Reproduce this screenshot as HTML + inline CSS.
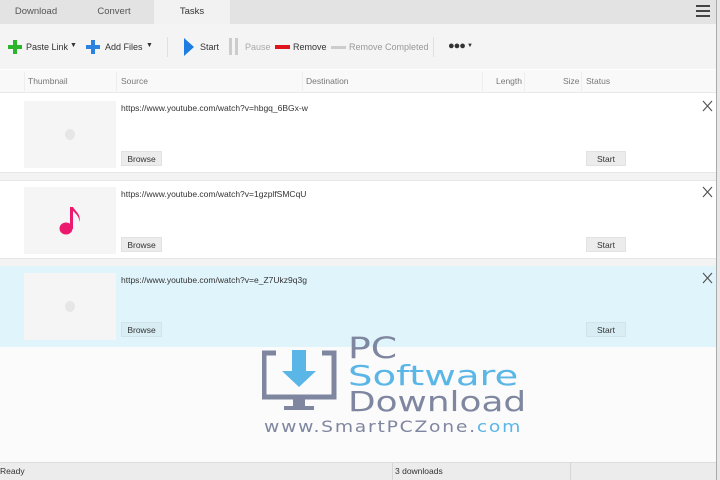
<!DOCTYPE html>
<html><head><meta charset="utf-8"><style>
*{margin:0;padding:0;box-sizing:border-box}
body{width:720px;height:480px;overflow:hidden;background:#fff;font-family:"Liberation Sans",sans-serif;font-size:9px;color:#333;position:relative}
.a{position:absolute}
.tab{position:absolute;top:0;height:24px;line-height:24px;font-size:9.5px;color:#555;text-align:center}
.btn{position:absolute;height:15px;line-height:15px;background:#ececec;border:1px solid #e2e2e2;font-size:8.5px;text-align:center;color:#333}
.thumb{position:absolute;left:24px;width:92px;height:67px;background:#f5f5f5}
.dot{position:absolute;left:41px;top:28px;width:10px;height:11px;border-radius:50%;background:#e6e6e6}
.url{position:absolute;left:121px;font-size:8.5px;color:#333}
.x{position:absolute;left:702px}
.hd{position:absolute;top:76px;font-size:8.5px;color:#777}
.wm{position:absolute;left:348px;line-height:30px;font-family:'DejaVu Sans',sans-serif;transform-origin:0 0;white-space:nowrap}
</style></head><body>
<div class="a" style="left:0;top:0;width:720px;height:24px;background:#e3e3e3"></div>
<div class="tab" style="left:0;width:72px">Download</div>
<div class="tab" style="left:76px;width:76px">Convert</div>
<div class="tab" style="left:154px;width:76px;background:#f2f2f2;color:#333">Tasks</div>
<div class="a" style="left:696px;top:5px;width:14px;height:2px;background:#444"></div>
<div class="a" style="left:696px;top:10px;width:14px;height:2px;background:#444"></div>
<div class="a" style="left:696px;top:15px;width:14px;height:2px;background:#444"></div>
<div class="a" style="left:0;top:24px;width:720px;height:45px;background:#f4f4f4"></div>
<div class="a" style="left:8px;top:45px;width:14px;height:4px;background:#2bb52b"></div>
<div class="a" style="left:13px;top:40px;width:4px;height:14px;background:#2bb52b"></div>
<div class="a" style="left:26px;top:42px;font-size:9px">Paste Link</div>
<div class="a" style="left:70px;top:42px;font-size:7px">▼</div>
<div class="a" style="left:86px;top:45px;width:14px;height:4px;background:#2b82e0"></div>
<div class="a" style="left:91px;top:40px;width:4px;height:14px;background:#2b82e0"></div>
<div class="a" style="left:105px;top:42px;font-size:9px">Add Files</div>
<div class="a" style="left:146px;top:42px;font-size:7px">▼</div>
<div class="a" style="left:167px;top:37px;width:1px;height:20px;background:#e0e0e0"></div>
<svg class="a" style="left:183px;top:38px" width="12" height="18"><path d="M1 0L11 9L1 18Z" fill="#1e7de0"/></svg>
<div class="a" style="left:200px;top:42px">Start</div>
<div class="a" style="left:229px;top:38px;width:3px;height:17px;background:#ccc"></div>
<div class="a" style="left:235px;top:38px;width:3px;height:17px;background:#ccc"></div>
<div class="a" style="left:245px;top:42px;color:#aaa">Pause</div>
<div class="a" style="left:275px;top:45px;width:15px;height:4px;background:#e0141e"></div>
<div class="a" style="left:293px;top:42px">Remove</div>
<div class="a" style="left:331px;top:46px;width:15px;height:3px;background:#ccc"></div>
<div class="a" style="left:349px;top:42px;color:#999">Remove Completed</div>
<div class="a" style="left:433px;top:37px;width:1px;height:20px;background:#e0e0e0"></div>
<div class="a" style="left:448px;top:40px;font-size:11px;color:#333;letter-spacing:-1px">●●●</div>
<div class="a" style="left:467px;top:43px;font-size:6px">▼</div>
<div class="a" style="left:0;top:70px;width:720px;height:23px;background:#f9f9f9;border-bottom:1px solid #e8e8e8"></div>
<div class="hd" style="left:28px">Thumbnail</div>
<div class="hd" style="left:121px">Source</div>
<div class="hd" style="left:306px">Destination</div>
<div class="hd" style="left:496px">Length</div>
<div class="a" style="left:524px;top:72px;width:1px;height:19px;background:#eee"></div>
<div class="hd" style="left:563px">Size</div>
<div class="hd" style="left:586px">Status</div>
<div class="a" style="left:24px;top:72px;width:1px;height:19px;background:#eee"></div>
<div class="a" style="left:116px;top:72px;width:1px;height:19px;background:#eee"></div>
<div class="a" style="left:302px;top:72px;width:1px;height:19px;background:#eee"></div>
<div class="a" style="left:482px;top:72px;width:1px;height:19px;background:#eee"></div>
<div class="a" style="left:581px;top:72px;width:1px;height:19px;background:#eee"></div>
<div class="a" style="left:0;top:172px;width:720px;height:9px;background:#f3f3f3;border-top:1px solid #e6e6e6;border-bottom:1px solid #e6e6e6"></div>
<div class="a" style="left:0;top:258px;width:720px;height:8px;background:#f3f3f3;border-top:1px solid #e6e6e6"></div>
<div class="a" style="left:0;top:266px;width:720px;height:81px;background:#e0f4fb"></div>
<div class="thumb" style="top:101px"><div class="dot"></div></div>
<div class="url" style="top:103px">https://www.youtube.com/watch?v=hbgq_6BGx-w</div>
<div class="btn" style="left:121px;top:151px;width:41px">Browse</div>
<div class="btn" style="left:586px;top:151px;width:40px">Start</div>
<svg class="x" style="top:100px" width="11" height="12"><path d="M1 1L10 11M10 1L1 11" stroke="#555" stroke-width="1.2"/></svg>
<div class="thumb" style="top:187px"></div>
<svg class="a" style="left:58px;top:205px" width="26" height="32"><ellipse cx="8" cy="23.5" rx="6.5" ry="6" fill="#ec1a6e"/><rect x="12" y="2" width="3" height="22" fill="#ec1a6e"/><path d="M13 2C15 8 22 10 21 17C24 10 17 6 15 2Z" fill="#ec1a6e"/></svg>
<div class="url" style="top:189px">https://www.youtube.com/watch?v=1gzplfSMCqU</div>
<div class="btn" style="left:121px;top:237px;width:41px">Browse</div>
<div class="btn" style="left:586px;top:237px;width:40px">Start</div>
<svg class="x" style="top:186px" width="11" height="12"><path d="M1 1L10 11M10 1L1 11" stroke="#555" stroke-width="1.2"/></svg>
<div class="thumb" style="top:273px"><div class="dot"></div></div>
<div class="url" style="top:275px">https://www.youtube.com/watch?v=e_Z7Ukz9q3g</div>
<div class="btn" style="left:121px;top:322px;width:41px;background:#d8edf4;border-color:#cfe4ec">Browse</div>
<div class="btn" style="left:586px;top:322px;width:40px;background:#d8edf4;border-color:#cfe4ec">Start</div>
<svg class="x" style="top:272px" width="11" height="12"><path d="M1 1L10 11M10 1L1 11" stroke="#555" stroke-width="1.2"/></svg>
<div class="a" style="left:0;top:347px;width:720px;height:116px;background:#fbfbfb"></div>
<svg class="a" style="left:262px;top:345px" width="80" height="70"><path d="M14 8H2V52H72V8H60" fill="none" stroke="#7f86a0" stroke-width="5"/><rect x="30" y="5" width="14" height="22" fill="#5ab6e6"/><path d="M20 26H54L37 42Z" fill="#5ab6e6"/><rect x="31" y="54" width="12" height="8" fill="#7f86a0"/><rect x="22" y="61" width="30" height="4" fill="#7f86a0"/></svg>
<div class="wm" style="top:333px;font-size:29px;color:#7f86a0;transform:scaleX(1.3)">PC</div>
<div class="wm" style="top:361px;font-size:28px;color:#5ab6e6;transform:scaleX(1.38)">Software</div>
<div class="wm" style="top:387px;font-size:28px;color:#7f86a0;transform:scaleX(1.28)">Download</div>
<div class="wm" style="left:264px;top:412px;font-size:16px;color:#7f86a0;letter-spacing:1.5px;transform:scaleX(1.17)">www.SmartPCZone.<span style="color:#5ab6e6">com</span></div>
<div class="a" style="left:0;top:462px;width:720px;height:18px;background:#ececec;border-top:1px solid #dcdcdc"></div>
<div class="a" style="left:0;top:466px;font-size:8.5px">Ready</div>
<div class="a" style="left:392px;top:463px;width:1px;height:17px;background:#d6d6d6"></div>
<div class="a" style="left:395px;top:466px;font-size:8.5px">3 downloads</div>
<div class="a" style="left:570px;top:463px;width:1px;height:17px;background:#d6d6d6"></div>
<div class="a" style="left:716px;top:0;width:4px;height:480px;background:#e8e8e8;border-left:1px solid #aaa"></div>
</body></html>
